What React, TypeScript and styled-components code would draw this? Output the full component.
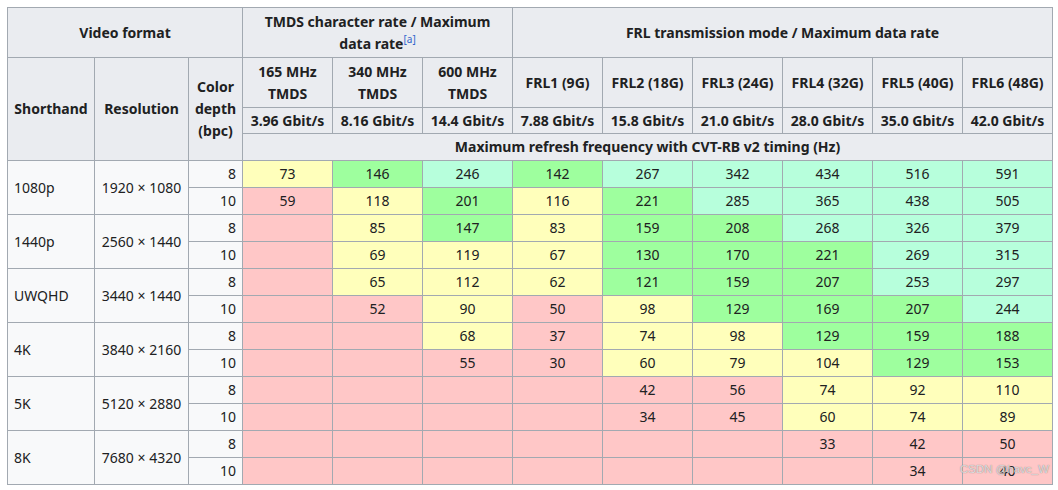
import React from "react";
import styled, { createGlobalStyle } from "styled-components";

const Global = createGlobalStyle`
  html, body { margin: 0; padding: 0; background: #ffffff; }
  body { font-family: "Noto Sans", "Open Sans", sans-serif; color: #202122; }
`;

const Page = styled.div`
  position: relative;
  padding: 7px;
  width: 1058px;
  height: 490px;
  box-sizing: border-box;
`;

const Table = styled.table`
  border-collapse: collapse;
  table-layout: fixed;
  width: 1046px;
  font-size: 14px;
  color: #202122;
  background: #f8f9fa;
  border: 1px solid #a2a9b1;
`;

const Th = styled.th<{ $h?: number }>`
  background: #eaecf0;
  border: 1px solid #a2a9b1;
  font-weight: 700;
  text-align: center;
  padding: 0 4px;
  line-height: 22px;
  height: ${(p) => (p.$h ? `${p.$h}px` : "auto")};
  box-sizing: border-box;
  white-space: normal;
`;

const Sup = styled.sup`
  font-size: 10px;
  font-weight: 400;
  line-height: 1;
  vertical-align: 6px;
  color: #3366cc;
`;

type Tone = "Y" | "G" | "M" | "R";
const toneBg: Record<Tone, string> = {
  Y: "#ffffbb",
  G: "#9eff9e",
  M: "#b7ffdc",
  R: "#ffc7c7",
};

const Stub = styled.td<{ $align: "left" | "center" }>`
  background: #f8f9fa;
  border: 1px solid #a2a9b1;
  text-align: ${(p) => p.$align};
  padding: 0 6px;
  line-height: 20px;
  white-space: nowrap;
`;

const Depth = styled.td`
  background: #f8f9fa;
  border: 1px solid #a2a9b1;
  text-align: right;
  padding: 0 6px;
  height: 27px;
  line-height: 20px;
  box-sizing: border-box;
`;

const Cell = styled.td<{ $tone: Tone }>`
  background: ${(p) => toneBg[p.$tone]};
  border: 1px solid #a2a9b1;
  text-align: center;
  padding: 0 4px;
  line-height: 20px;
`;

const Watermark = styled.div`
  position: absolute;
  left: 960px;
  top: 463px;
  white-space: nowrap;
  font-family: "Liberation Sans", Arial, sans-serif;
  font-size: 11.5px;
  color: rgba(240, 240, 240, 0.85);
  text-shadow: 0 0 1px rgba(90, 90, 90, 0.9);
  pointer-events: none;
`;

type Entry = [string, Tone];
const e = (v: string, t: Tone): Entry => [v, t];
const R = e("", "R");

interface Format {
  name: string;
  res: string;
  rows: [Entry[], Entry[]];
}

const formats: Format[] = [
  {
    name: "1080p",
    res: "1920 × 1080",
    rows: [
      [e("73", "Y"), e("146", "G"), e("246", "M"), e("142", "G"), e("267", "M"), e("342", "M"), e("434", "M"), e("516", "M"), e("591", "M")],
      [e("59", "R"), e("118", "Y"), e("201", "G"), e("116", "Y"), e("221", "G"), e("285", "M"), e("365", "M"), e("438", "M"), e("505", "M")],
    ],
  },
  {
    name: "1440p",
    res: "2560 × 1440",
    rows: [
      [R, e("85", "Y"), e("147", "G"), e("83", "Y"), e("159", "G"), e("208", "G"), e("268", "M"), e("326", "M"), e("379", "M")],
      [R, e("69", "Y"), e("119", "Y"), e("67", "Y"), e("130", "G"), e("170", "G"), e("221", "G"), e("269", "M"), e("315", "M")],
    ],
  },
  {
    name: "UWQHD",
    res: "3440 × 1440",
    rows: [
      [R, e("65", "Y"), e("112", "Y"), e("62", "Y"), e("121", "G"), e("159", "G"), e("207", "G"), e("253", "M"), e("297", "M")],
      [R, e("52", "R"), e("90", "Y"), e("50", "R"), e("98", "Y"), e("129", "G"), e("169", "G"), e("207", "G"), e("244", "M")],
    ],
  },
  {
    name: "4K",
    res: "3840 × 2160",
    rows: [
      [R, R, e("68", "Y"), e("37", "R"), e("74", "Y"), e("98", "Y"), e("129", "G"), e("159", "G"), e("188", "G")],
      [R, R, e("55", "R"), e("30", "R"), e("60", "Y"), e("79", "Y"), e("104", "Y"), e("129", "G"), e("153", "G")],
    ],
  },
  {
    name: "5K",
    res: "5120 × 2880",
    rows: [
      [R, R, R, R, e("42", "R"), e("56", "R"), e("74", "Y"), e("92", "Y"), e("110", "Y")],
      [R, R, R, R, e("34", "R"), e("45", "R"), e("60", "Y"), e("74", "Y"), e("89", "Y")],
    ],
  },
  {
    name: "8K",
    res: "7680 × 4320",
    rows: [
      [R, R, R, R, R, R, e("33", "R"), e("42", "R"), e("50", "R")],
      [R, R, R, R, R, R, R, e("34", "R"), e("40", "R")],
    ],
  },
];

const tmds = [
  ["165 MHz TMDS", "3.96 Gbit/s"],
  ["340 MHz TMDS", "8.16 Gbit/s"],
  ["600 MHz TMDS", "14.4 Gbit/s"],
];
const frl = [
  ["FRL1 (9G)", "7.88 Gbit/s"],
  ["FRL2 (18G)", "15.8 Gbit/s"],
  ["FRL3 (24G)", "21.0 Gbit/s"],
  ["FRL4 (32G)", "28.0 Gbit/s"],
  ["FRL5 (40G)", "35.0 Gbit/s"],
  ["FRL6 (48G)", "42.0 Gbit/s"],
];

const colWidths = [87, 94, 54, 90, 90, 90, 90, 90, 90, 90, 90, 90];

export default function App() {
  return (
    <Page>
      <Global />
      <Table>
        <colgroup>
          {colWidths.map((w, i) => (
            <col key={i} style={{ width: w }} />
          ))}
        </colgroup>
        <thead>
          <tr>
            <Th colSpan={3} $h={50}>Video format</Th>
            <Th colSpan={3} $h={50}>
              TMDS character rate / Maximum
              <br />
              data rate<Sup>[a]</Sup>
            </Th>
            <Th colSpan={6} $h={50}>FRL transmission mode / Maximum data rate</Th>
          </tr>
          <tr>
            <Th rowSpan={3}>Shorthand</Th>
            <Th rowSpan={3}>Resolution</Th>
            <Th rowSpan={3}>Color depth (bpc)</Th>
            {tmds.map(([a]) => (
              <Th key={a} $h={50}>{a}</Th>
            ))}
            {frl.map(([a]) => (
              <Th key={a} $h={50}>{a}</Th>
            ))}
          </tr>
          <tr>
            {[...tmds, ...frl].map(([a, b]) => (
              <Th key={a} $h={26}>{b}</Th>
            ))}
          </tr>
          <tr>
            <Th colSpan={9} $h={27}>Maximum refresh frequency with CVT-RB v2 timing (Hz)</Th>
          </tr>
        </thead>
        <tbody>
          {formats.map((f) =>
            f.rows.map((row, ri) => (
              <tr key={f.name + ri}>
                {ri === 0 && (
                  <>
                    <Stub rowSpan={2} $align="left">{f.name}</Stub>
                    <Stub rowSpan={2} $align="center">{f.res}</Stub>
                  </>
                )}
                <Depth>{ri === 0 ? "8" : "10"}</Depth>
                {row.map(([v, t], ci) => (
                  <Cell key={ci} $tone={t}>{v}</Cell>
                ))}
              </tr>
            ))
          )}
        </tbody>
      </Table>
      <Watermark>CSDN @havc_W</Watermark>
    </Page>
  );
}
